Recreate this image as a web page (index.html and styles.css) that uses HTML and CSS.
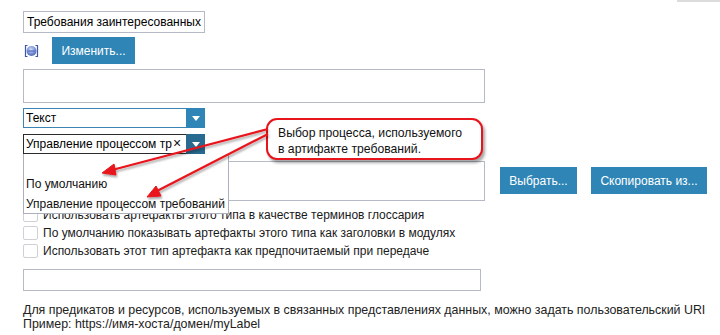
FILE: index.html
```html
<!DOCTYPE html>
<html lang="ru">
<head>
<meta charset="utf-8">
<link rel="stylesheet" href="styles.css">
</head>
<body>
<div class="topbar"></div>
<div class="page">
  <div class="row r-name"><div class="field w182">Требования заинтересованных</div></div>
  <div class="row r-icon">
    <svg class="radio" width="15" height="14" viewBox="0 0 15 14">
      <defs><radialGradient id="g" cx="0.45" cy="0.35" r="0.75"><stop offset="0" stop-color="#d4def5"/><stop offset="0.55" stop-color="#7890d6"/><stop offset="1" stop-color="#3a54a6"/></radialGradient></defs>
      <path d="M3.5 1.5H1.5V12.5H3.5M11.5 1.5H13.5V12.5H11.5" fill="none" stroke="#3d57a8" stroke-width="1.2"/>
      <circle cx="7.5" cy="7" r="5" fill="url(#g)"/>
      <rect x="3.5" y="6.2" width="8" height="1.6" fill="#5a74c2" opacity="0.8"/>
    </svg>
    <button class="btn b-edit">Изменить...</button>
  </div>
  <div class="row r-area"><div class="area w462"></div></div>
  <div class="row r-sel1">
    <div class="select s1"><span class="val">Текст</span><span class="arrow"><svg width="8" height="5" viewBox="0 0 8 5"><path d="M0 0H8L4 5Z" fill="#fff"/></svg></span></div>
  </div>
  <div class="row r-sel2">
    <div class="select s2"><span class="val">Управление процессом тр</span><span class="clear">×</span><span class="arrow"><svg width="8" height="5" viewBox="0 0 8 5"><path d="M0 0H8L4 5Z" fill="#fff"/></svg></span>
      <ul class="list">
        <li class="blank"></li>
        <li>По умолчанию</li>
        <li>Управление процессом требований</li>
      </ul>
    </div>
  </div>
  <div class="row r-area2">
    <div class="area area2 w462"></div>
    <button class="btn b-pick">Выбрать...</button>
    <button class="btn b-copy">Скопировать из...</button>
  </div>
  <div class="checks">
    <label class="chk"><span class="box"></span>Использовать артефакты этого типа в качестве терминов глоссария</label>
    <label class="chk"><span class="box"></span>По умолчанию показывать артефакты этого типа как заголовки в модулях</label>
    <label class="chk"><span class="box"></span>Использовать этот тип артефакта как предпочитаемый при передаче</label>
  </div>
  <div class="row r-uri"><div class="field w458"></div></div>
  <p class="help">Для предикатов и ресурсов, используемых в связанных представлениях данных, можно задать пользовательский URI<br>Пример: https://имя-хоста/домен/myLabel</p>
</div>

<div class="callout">Выбор процесса, используемого<br>в артифакте требований.</div>
<svg class="arrows" width="720" height="335" viewBox="0 0 720 335">
  <defs>
    <filter id="sh" x="-10%" y="-10%" width="130%" height="140%"><feDropShadow dx="1" dy="2" stdDeviation="1.2" flood-color="#000" flood-opacity="0.35"/></filter>
  </defs>
  <g filter="url(#sh)" stroke="#e8141b" fill="#e8141b">
    <line x1="268" y1="129" x2="112" y2="170" stroke-width="2.2"/>
    <path d="M102 173 L114 164 L116 175 Z" stroke-width="1"/>
    <line x1="268" y1="134" x2="157" y2="191" stroke-width="2.2"/>
    <path d="M147 197 L156 186 L161 196 Z" stroke-width="1"/>
  </g>
</svg>
</body>
</html>
```

FILE: styles.css
```css
* { box-sizing: border-box; }
html, body { margin: 0; padding: 0; background: #fff; }
body {
  width: 720px; height: 335px; overflow: hidden; position: relative;
  font-family: "Liberation Sans", Arial, sans-serif; font-size: 12px; color: #222;
}
.topbar { position: absolute; top: 0; left: 677px; width: 43px; height: 2px; background: #dcdcdc; }
.page { padding: 11px 0 0 23px; }
.row { display: flex; align-items: center; }
.field, .area {
  border: 1px solid #b6bac6; background: #fff;
}
.field { height: 22px; font-size: 12px; line-height: 20px; padding-left: 3px; color: #000; white-space: nowrap; overflow: hidden; }
.w182 { width: 182px; }
.w458 { width: 458px; }
.w462 { width: 462px; }
.r-icon { margin-top: 4px; height: 27px; }
.radio { margin-left: 1px; }
.btn {
  border: none; background: #2f86b6; color: #fff; font-family: inherit; font-size: 12px;
  height: 27px; padding: 0; cursor: pointer;
}
.b-edit { width: 83px; margin-left: 13px; }
.r-area { margin-top: 5px; }
.area { height: 34px; }
.r-sel1 { margin-top: 5px; }
.select { position: relative; display: flex; width: 182px; height: 20px; font-size: 12px; color: #000; }
.select .val { flex: 1; border: 1px solid #3c84b4; border-right: none; line-height: 18px; padding-left: 2px; white-space: nowrap; overflow: hidden; }
.select .arrow { width: 19px; background: #2f86b6; display: flex; align-items: center; justify-content: center; }
.r-sel2 { margin-top: 6px; position: relative; z-index: 2; }
.s2 .val { border-color: #2b2b2b; border-right: none; flex: 0 0 auto; width: 149px; }
.s2 .clear { width: 14px; padding-left: 1px; border: 1px solid #2b2b2b; border-left: none; border-right: none; line-height: 17px; font-size: 14px; color: #111; }
.s2 .arrow { background: #296a91; }
.list {
  position: absolute; left: 0; top: 20px; width: 206px; margin: 0; padding: 0; list-style: none;
  background: #fff; border: 1px solid #aab0bd; border-top: none; font-size: 12px; color: #111;
}
.list li { height: 19.5px; line-height: 20px; padding-left: 2px; white-space: nowrap; }
.list li.blank { height: 20px; }
.r-area2 { margin-top: 7px; align-items: flex-start; }
.area2 { height: 40px; }
.b-pick { width: 77px; margin-left: 15px; margin-top: 6px; }
.b-copy { width: 116px; margin-left: 14px; margin-top: 6px; }
.checks { margin-top: 7px; display: flex; flex-direction: column; gap: 4px; }
.chk { display: flex; align-items: center; height: 14px; font-size: 12px; color: #1a1a1a; }
.box { width: 15px; height: 14px; border: 1px solid #cfd1d6; border-radius: 2px; margin-right: 5px; background: #fff; }
.r-uri { margin-top: 11px; }
.r-uri .field { height: 22px; }
.help { margin: 12px 0 0; font-size: 12.4px; line-height: 14px; color: #222; }
.callout {
  position: absolute; z-index: 4; left: 266px; top: 118px; width: 217px; height: 42px;
  border: 2px solid #e8141b; border-radius: 11px; background: #fff;
  box-shadow: 2px 3px 3px rgba(0,0,0,0.35);
  padding: 5px 0 0 10px; font-size: 12.2px; line-height: 16px; color: #111;
}
.arrows { position: absolute; z-index: 5; left: 0; top: 0; pointer-events: none; }
```
